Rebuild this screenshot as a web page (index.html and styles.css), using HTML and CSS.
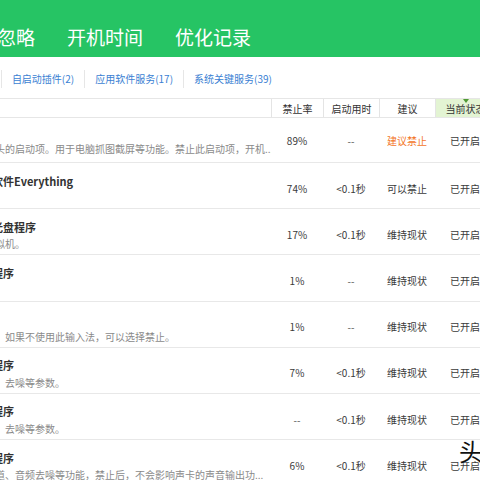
FILE: index.html
```html
<!DOCTYPE html>
<html lang="zh-CN">
<head>
<meta charset="utf-8">
<title>启动项管理</title>
<link rel="stylesheet" href="styles.css">
</head>
<body>
<div class="crop">
  <div class="window">
    <nav class="nav">
      <span class="nav-item">启动项</span>
      <span class="nav-item">已忽略</span>
      <span class="nav-item">开机时间</span>
      <span class="nav-item">优化记录</span>
    </nav>
    <div class="subtabs">
      <span class="subtab">启动项(12)</span>
      <span class="subtab">自启动插件(2)</span>
      <span class="subtab">应用软件服务(17)</span>
      <span class="subtab">系统关键服务(39)</span>
    </div>
    <div class="grid">
      <div class="row head">
        <div class="hc c-name">启动项名称</div>
        <div class="hc c-rate">禁止率</div>
        <div class="hc c-time">启动用时</div>
        <div class="hc c-advice">建议</div>
        <div class="hc c-state sorted">当前状态</div>
      </div>

      <div class="row item first">
        <div class="name c-name">
          <div class="title">电脑截图工具</div>
          <div class="desc">这是电脑外接摄像头的启动项。用于电脑抓图截屏等功能。禁止此启动项，开机...</div>
        </div>
        <div class="val c-rate">89%</div>
        <div class="val c-time dash">--</div>
        <div class="val c-advice warn">建议禁止</div>
        <div class="val c-state">已开启</div>
      </div>

      <div class="row item">
        <div class="name c-name">
          <div class="title">免费文件搜索小软件Everything</div>
          <div class="desc">可快速搜索文件。</div>
        </div>
        <div class="val c-rate">74%</div>
        <div class="val c-time">&lt;0.1秒</div>
        <div class="val c-advice">可以禁止</div>
        <div class="val c-state">已开启</div>
      </div>

      <div class="row item">
        <div class="name c-name">
          <div class="title">精灵虚拟光驱及光盘程序</div>
          <div class="desc">用于创建及运行虚拟机。</div>
        </div>
        <div class="val c-rate">17%</div>
        <div class="val c-time">&lt;0.1秒</div>
        <div class="val c-advice">维持现状</div>
        <div class="val c-state">已开启</div>
      </div>

      <div class="row item">
        <div class="name c-name">
          <div class="title">打印机后台服务程序</div>
          <div class="desc">打印服务。</div>
        </div>
        <div class="val c-rate">1%</div>
        <div class="val c-time dash">--</div>
        <div class="val c-advice">维持现状</div>
        <div class="val c-state">已开启</div>
      </div>

      <div class="row item">
        <div class="name c-name">
          <div class="title">搜狗拼音输入法</div>
          <div class="desc">搜狗输入法的组件，如果不使用此输入法，可以选择禁止。</div>
        </div>
        <div class="val c-rate">1%</div>
        <div class="val c-time dash">--</div>
        <div class="val c-advice">维持现状</div>
        <div class="val c-state">已开启</div>
      </div>

      <div class="row item">
        <div class="name c-name">
          <div class="title">高清晰音频驱动程序</div>
          <div class="desc">可设置音量、混响，去噪等参数。</div>
        </div>
        <div class="val c-rate">7%</div>
        <div class="val c-time">&lt;0.1秒</div>
        <div class="val c-advice">维持现状</div>
        <div class="val c-state">已开启</div>
      </div>

      <div class="row item">
        <div class="name c-name">
          <div class="title">麦克风阵列管理程序</div>
          <div class="desc">用于设置回声消除，去噪等参数。</div>
        </div>
        <div class="val c-rate dash">--</div>
        <div class="val c-time">&lt;0.1秒</div>
        <div class="val c-advice">维持现状</div>
        <div class="val c-state">已开启</div>
      </div>

      <div class="row item">
        <div class="name c-name">
          <div class="title">多声道音效增强程序</div>
          <div class="desc">可提供虚拟环绕声道、音频去噪等功能，禁止后，不会影响声卡的声音输出功...</div>
        </div>
        <div class="val c-rate">6%</div>
        <div class="val c-time">&lt;0.1秒</div>
        <div class="val c-advice">维持现状</div>
        <div class="val c-state">已开启</div>
      </div>
    </div>
  </div>
  <span class="watermark">头条</span>
</div>
</body>
</html>
```

FILE: styles.css
```css
html, body {
  margin: 0;
  padding: 0;
}

body {
  width: 480px;
  height: 480px;
  overflow: hidden;
  background: #ffffff;
  font-family: "Noto Sans CJK SC", "Noto Sans", sans-serif;
  color: #333333;
}

.crop {
  position: relative;
  width: 480px;
  height: 480px;
  overflow: hidden;
}

/* the screenshot is a crop of a wider window */
.window {
  margin-left: -120px;
  width: 615px;
}

/* ---------- top green navigation ---------- */
.nav {
  box-sizing: border-box;
  height: 57px;
  padding: 16px 0 0 9px;
  display: flex;
  align-items: center;
  gap: 32px;
  background: #26c464;
  color: #ffffff;
  font-size: 19px;
  line-height: 24px;
  white-space: nowrap;
}

/* ---------- sub tabs ---------- */
.subtabs {
  box-sizing: border-box;
  height: 41px;
  padding: 2px 0 0 53px;
  display: flex;
  align-items: center;
  font-size: 10px;
  color: #3b7fd3;
  white-space: nowrap;
}

.subtab {
  height: 18px;
  line-height: 18px;
  padding: 0 10px;
}

.subtab + .subtab {
  border-left: 1px solid #e6e6e6;
}

/* ---------- table ---------- */
.grid {
  border-top: 1px solid #e6e6e6;
}

.row {
  display: flex;
}

.c-name  { width: 391px; }
.c-rate  { width: 52px; }
.c-time  { width: 56px; }
.c-advice{ width: 56px; }
.c-state { width: 60px; }

.head {
  height: 19px;
  box-sizing: border-box;
  border-bottom: 1px solid #e6e6e6;
  font-size: 10px;
  color: #333333;
}

.hc {
  box-sizing: border-box;
  display: flex;
  align-items: center;
  justify-content: center;
  border-left: 1px solid #e4e4e4;
  white-space: nowrap;
}

.head .c-name {
  border-left: none;
  justify-content: flex-start;
  padding-left: 35px;
}

.sorted {
  position: relative;
  background: #e3f4d3;
}

.sorted::before {
  content: "";
  position: absolute;
  top: 0;
  left: 50%;
  margin-left: -3px;
  border-left: 3px solid transparent;
  border-right: 3px solid transparent;
  border-top: 4px solid #4f9a33;
}

.item {
  box-sizing: border-box;
  height: 46.2px;
  border-bottom: 1px solid #e8e8e8;
}

.item.first {
  height: 45px;
}

.name {
  box-sizing: border-box;
  padding: 10.5px 2px 0 35px;
  overflow: hidden;
  white-space: nowrap;
}

.first .name {
  padding-top: 6.5px;
}

.title {
  font-size: 11px;
  font-weight: 700;
  line-height: 14px;
  color: #333333;
}

.desc {
  margin-top: 3.5px;
  font-size: 10px;
  line-height: 14px;
  color: #8a8a8a;
}

.val {
  box-sizing: border-box;
  display: flex;
  align-items: center;
  justify-content: center;
  padding-top: 5px;
  font-size: 10px;
  color: #3a3a3a;
  white-space: nowrap;
}

.first .val {
  padding-top: 1px;
}

.dash {
  color: #555555;
}

.warn {
  color: #f37628;
}

/* watermark overlay in the corner */
.watermark {
  position: absolute;
  left: 459px;
  top: 437px;
  font-size: 24px;
  line-height: 28px;
  color: #111111;
  text-shadow: 0 0 2px #ffffff;
  white-space: nowrap;
}
```
